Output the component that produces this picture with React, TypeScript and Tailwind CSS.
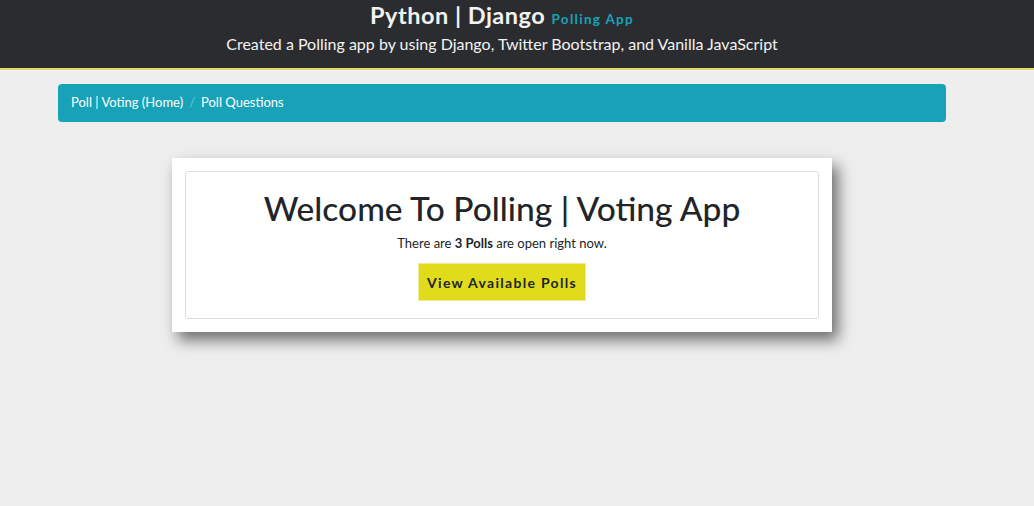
import React from "react";

export default function App() {
  const font = { fontFamily: '"Segoe UI", Lato, "Noto Sans", sans-serif' };
  return (
    <div className="min-h-[506px] bg-[#eeeeee]" style={font}>
      <header className="bg-[#2b2c30] border-b-2 border-[#e0dc6a] h-[70px] flex flex-col items-center pr-[30px]">
        <h1 className="text-[23.5px] leading-[30px] font-bold text-[#f2f2f2] tracking-[0.5px]">
          Python | Django{" "}
          <span className="text-[13.5px] font-bold text-[#17a2b8] tracking-[1.3px]">Polling App</span>
        </h1>
        <p className="text-[16px] leading-[24px] text-[#f2f2f2] mt-[-2px]">
          Created a Polling app by using Django, Twitter Bootstrap, and Vanilla JavaScript
        </p>
      </header>
      <div className="px-[58px] pt-[14px]">
        <nav className="w-[888px] h-[38px] bg-[#17a2b8] rounded-[4px] flex items-center px-[13px] text-[13px] text-white">
          <span>Poll | Voting (Home)</span>
          <span className="px-[6px] text-[#6cc5d3]">/</span>
          <span>Poll Questions</span>
        </nav>
      </div>
      <div className="flex justify-center pt-[36px] pr-[30px]">
        <div className="w-[660px] bg-white p-[13px] shadow-[6px_8px_14px_rgba(0,0,0,0.55)]">
          <div className="border border-[#dddddd] rounded-[3px] flex flex-col items-center pt-[16px] pb-[17px]">
            <h2 className="text-[33.5px] leading-[40px] font-medium text-[#212529]">Welcome To Polling | Voting App</h2>
            <p className="text-[13px] leading-[18px] text-[#212529] mt-[6px]">
              There are <b>3 Polls</b> are open right now.
            </p>
            <button className="mt-[11px] w-[168px] h-[38px] bg-[#e0dc1c] border border-[#ecea9a] text-[14px] font-bold tracking-[1.3px] text-[#212529]">
              View Available Polls
            </button>
          </div>
        </div>
      </div>
    </div>
  );
}
